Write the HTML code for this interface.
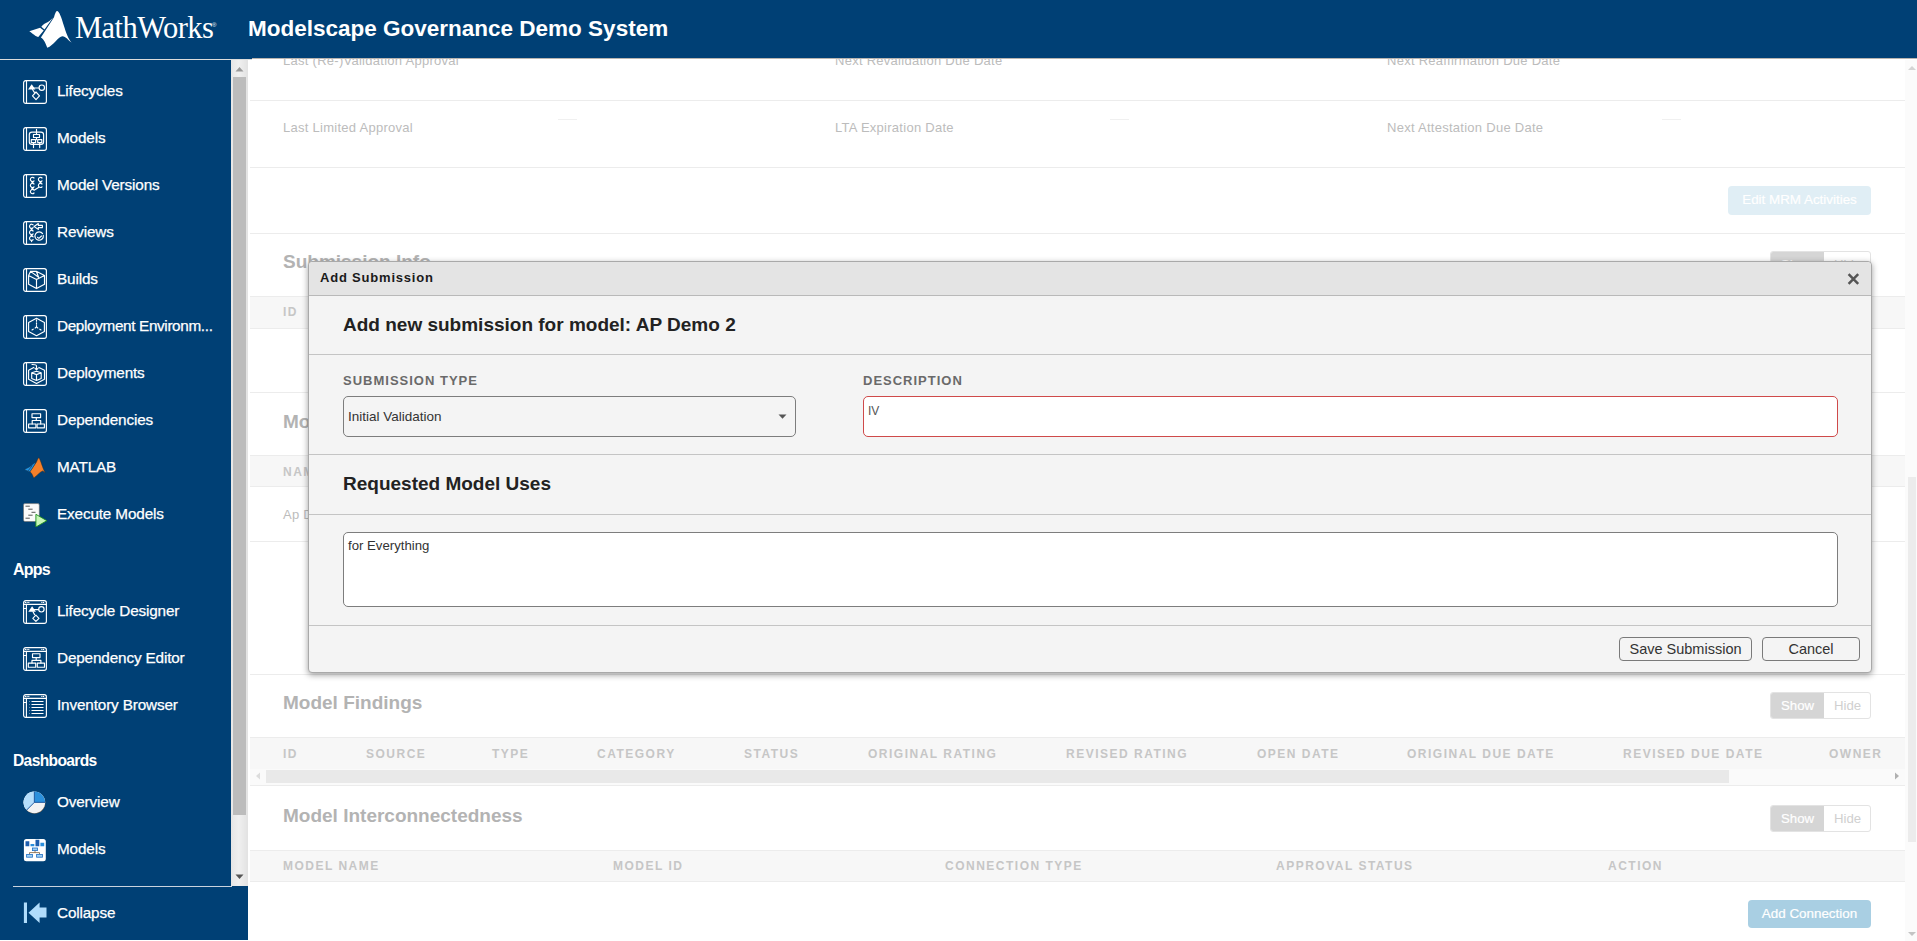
<!DOCTYPE html>
<html><head><meta charset="utf-8">
<style>
*{box-sizing:border-box;margin:0;padding:0}
html,body{width:1917px;height:941px;overflow:hidden;background:#fff;font-family:"Liberation Sans",sans-serif}
.a{position:absolute;white-space:nowrap}
#hdr{position:absolute;left:0;top:0;width:1917px;height:58px;background:#004075}
#hline{position:absolute;left:0;top:58px;width:252px;height:1px;background:#004075;box-shadow:0 1px 0 #dcdcdc}
#side{position:absolute;left:0;top:60px;width:248px;height:880px;background:#004075}
.nav{position:absolute;left:57px;color:#fff;font-size:15.3px;line-height:19px;letter-spacing:-0.15px;-webkit-text-stroke:0.25px #fff}
.ico{position:absolute;left:23px;width:24px;height:24px}
.sec{position:absolute;left:13px;color:#fff;font-weight:bold;font-size:15px;line-height:18px}
/* main */
.bt{color:#bcbcbc;font-size:13px;letter-spacing:0.27px;line-height:16px}
.hl{position:absolute;left:250px;width:1655px;height:1px;background:#ececec}
.band{position:absolute;left:250px;width:1655px;background:#f7f7f7;border-top:1px solid #ececec;border-bottom:1px solid #ececec}
.th{position:absolute;color:#c6c6c6;font-weight:bold;font-size:12px;letter-spacing:1.5px;line-height:16px}
.h2{position:absolute;left:283px;color:#b3b3b3;font-weight:bold;font-size:19px;line-height:22px}
.sh{position:absolute;left:1770px;width:101px;height:27px;border:1px solid #e3e3e3;border-radius:3px;overflow:hidden;background:#fff}
.sh .s{position:absolute;left:0;top:0;width:53px;height:100%;background:#d5d5d5;color:#fff;font-size:13.2px;line-height:26px;text-indent:10px;-webkit-text-stroke:0.2px #fff}
.sh .h{position:absolute;left:53px;top:0;width:48px;height:100%;color:#d0d0d0;font-size:13.2px;line-height:26px;text-indent:10px}
/* modal */
#modal{position:absolute;left:308px;top:261px;width:1564px;height:412px;background:#f4f4f4;border:1px solid #a9a9a9;border-radius:4px;box-shadow:0 2px 6px rgba(0,0,0,.38)}
#mtitle{position:absolute;left:0;top:0;width:100%;height:34px;background:#e4e4e4;border-bottom:1px solid #b9b9b9;border-radius:4px 4px 0 0}
.ml{position:absolute;left:0;width:1562px;height:1px;background:#c4c4c4}
.lbl{position:absolute;color:#6a6a6a;font-weight:bold;font-size:13px;letter-spacing:1px;line-height:15px}
.btn{position:absolute;border:1px solid #7a7a7a;border-radius:4px;background:#f4f4f4;color:#333;font-size:14.5px;line-height:23px;text-align:center}
</style></head><body>
<!-- right scrollbar -->
<div class="a" style="left:1905px;top:60px;width:12px;height:881px;background:#fbfbfb"></div>
<div class="a" style="left:1908px;top:477px;width:8px;height:365px;background:#ececec"></div>
<svg class="a" style="left:1907px;top:64px" width="10" height="8"><path d="M1 6 L5 2 L9 6Z" fill="#d4d4d4"/></svg>
<svg class="a" style="left:1907px;top:930px" width="10" height="8"><path d="M1 2 L5 6 L9 2Z" fill="#c4c4c4"/></svg>
<div class="a" style="left:248px;top:60px;width:2px;height:881px;background:#fff"></div>

<!-- MRM dates rows -->
<div class="a bt" style="left:283px;top:53px">Last (Re-)Validation Approval</div>
<div class="a bt" style="left:835px;top:53px">Next Revalidation Due Date</div>
<div class="a bt" style="left:1387px;top:53px">Next Reaffirmation Due Date</div>

<div class="hl" style="top:100px"></div>
<div class="a bt" style="left:283px;top:120px">Last Limited Approval</div>
<div class="a bt" style="left:835px;top:120px">LTA Expiration Date</div>
<div class="a bt" style="left:1387px;top:120px">Next Attestation Due Date</div>
<div class="a" style="left:558px;top:119px;width:19px;height:1px;background:#f0f0f0"></div>
<div class="a" style="left:1110px;top:119px;width:19px;height:1px;background:#f0f0f0"></div>
<div class="a" style="left:1662px;top:119px;width:19px;height:1px;background:#f0f0f0"></div>
<div class="hl" style="top:167px"></div>
<div class="a" style="left:1728px;top:186px;width:143px;height:29px;background:#e0eef5;border-radius:4px;color:#fff;font-size:13.4px;line-height:27px;text-align:center;-webkit-text-stroke:0.2px #fff">Edit MRM Activities</div>
<div class="hl" style="top:233px"></div>

<!-- Submission Info -->
<div class="h2" style="top:251px">Submission Info</div>
<div class="sh" style="top:251px"><div class="s">Show</div><div class="h">Hide</div></div>
<div class="band" style="top:296px;height:33px"></div>
<div class="th" style="left:283px;top:304px">ID</div>
<div class="hl" style="top:392px"></div>

<!-- Model Uses -->
<div class="h2" style="top:411px">Model Uses</div>
<div class="band" style="top:455px;height:32px"></div>
<div class="th" style="left:283px;top:464px">NAME</div>
<div class="a bt" style="left:283px;top:507px">Ap Demo 2</div>
<div class="hl" style="top:541px"></div>
<div class="hl" style="top:674px"></div>

<!-- Model Findings -->
<div class="h2" style="top:692px">Model Findings</div>
<div class="sh" style="top:692px"><div class="s">Show</div><div class="h">Hide</div></div>
<div class="band" style="top:737px;height:32px;border-bottom:none"></div>
<div class="th" style="left:283px;top:746px">ID</div>
<div class="th" style="left:366px;top:746px">SOURCE</div>
<div class="th" style="left:492px;top:746px">TYPE</div>
<div class="th" style="left:597px;top:746px">CATEGORY</div>
<div class="th" style="left:744px;top:746px">STATUS</div>
<div class="th" style="left:868px;top:746px">ORIGINAL RATING</div>
<div class="th" style="left:1066px;top:746px">REVISED RATING</div>
<div class="th" style="left:1257px;top:746px">OPEN DATE</div>
<div class="th" style="left:1407px;top:746px">ORIGINAL DUE DATE</div>
<div class="th" style="left:1623px;top:746px">REVISED DUE DATE</div>
<div class="th" style="left:1829px;top:746px">OWNER</div>
<div class="a" style="left:250px;top:769px;width:1655px;height:16px;background:#fafafa"></div>
<div class="a" style="left:266px;top:770px;width:1463px;height:13px;background:#e9e9e9"></div>
<svg class="a" style="left:254px;top:771px" width="8" height="10"><path d="M6 1.5 L2 5 L6 8.5Z" fill="#dcdcdc"/></svg>
<svg class="a" style="left:1893px;top:771px" width="8" height="10"><path d="M2 1.5 L6 5 L2 8.5Z" fill="#b0b0b0"/></svg>
<div class="hl" style="top:785px"></div>

<!-- Model Interconnectedness -->
<div class="h2" style="top:805px">Model Interconnectedness</div>
<div class="sh" style="top:805px"><div class="s">Show</div><div class="h">Hide</div></div>
<div class="band" style="top:850px;height:32px"></div>
<div class="th" style="left:283px;top:858px">MODEL NAME</div>
<div class="th" style="left:613px;top:858px">MODEL ID</div>
<div class="th" style="left:945px;top:858px">CONNECTION TYPE</div>
<div class="th" style="left:1276px;top:858px">APPROVAL STATUS</div>
<div class="th" style="left:1608px;top:858px">ACTION</div>
<div class="a" style="left:1748px;top:900px;width:123px;height:28px;background:#a9cfe3;border-radius:4px;color:#fff;font-size:13.4px;line-height:27px;text-align:center;-webkit-text-stroke:0.2px #fff">Add Connection</div>
<div id="hdr"></div><div class="a" style="left:252px;top:58px;width:1665px;height:1px;background:#b8b4b0"></div>
<div id="hline"></div>
<svg class="a" style="left:0;top:0" width="100" height="59" viewBox="0 0 100 59">
 <path fill="#fff" d="M40.9 37.5 L54 17.2 C55 14 55.8 11.3 57 11.1 C59.3 11.2 61.5 18 63.8 25.5 C66 32.5 68.5 39.5 71.6 42.6 C68.3 40.3 65.8 36.3 62.4 36.2 C58.5 36.3 53.5 45.5 47.3 47.8 C45.8 44 44 39 40.9 37.5 Z"/>
 <path fill="#fff" d="M41.3 26.7 C43.5 24.2 45.5 23 47.5 22.2 C49.8 21 51.6 18.8 53.1 17.4 L44.5 29.6 Z"/>
 <path fill="#fff" d="M29.3 31.3 C33 30 36.5 28.6 40.1 27.7 L43.7 30.5 L38.3 37.1 C36 36.8 32.5 33.5 29.3 31.3 Z"/>
</svg>
<div class="a" style="left:75px;top:10px;color:#fff;font-family:'Liberation Serif',serif;font-size:30.5px;line-height:36px;letter-spacing:-0.55px">MathWorks</div>
<div class="a" style="left:212px;top:21px;color:#fff;font-size:6px;line-height:8px">&#174;</div>
<div class="a" style="left:248px;top:15px;color:#fff;font-weight:bold;font-size:22.5px;line-height:28px">Modelscape Governance Demo System</div>
<div id="side"></div>
<div class="a" style="left:231px;top:60px;width:17px;height:826px;background:linear-gradient(90deg,#e6e6e6,#f0f0f0 45%,#e2e2e2)"></div>
<div class="a" style="left:233px;top:77px;width:13px;height:738px;background:#bcbcbc"></div>
<svg class="a" style="left:234px;top:65px" width="11" height="8"><path d="M1.5 6.5 L5.5 2 L9.5 6.5Z" fill="#9a9a9a"/></svg>
<svg class="a" style="left:234px;top:873px" width="11" height="8"><path d="M1.5 1.5 L5.5 6 L9.5 1.5Z" fill="#555"/></svg>
<div class="a" style="left:13px;top:886px;width:219px;height:1px;background:#c9d3de"></div>
<svg class="ico" style="top:80px" viewBox="0 0 24 24" fill="none" stroke="#fff" stroke-width="1.15" stroke-linecap="round" stroke-linejoin="round"><rect x="0.6" y="0.6" width="22.8" height="22.8" rx="2.2"/><line x1="3.5" y1="0.6" x2="3.5" y2="23.4"/><path d="M5 9.6 L8.7 4.3 L12.4 9.6Z" fill="#fff" stroke="none"/><line x1="9" y1="8" x2="16" y2="8"/><circle cx="18.8" cy="7.7" r="2.7"/><line x1="9.5" y1="9.5" x2="11.4" y2="12.4"/><path d="M13 12 L16.5 15.8 L13 19.6 L9.5 15.8Z"/></svg>
<div class="nav" style="top:81px">Lifecycles</div>
<svg class="ico" style="top:127px" viewBox="0 0 24 24" fill="none" stroke="#fff" stroke-width="1.15" stroke-linecap="round" stroke-linejoin="round"><rect x="0.6" y="0.6" width="22.8" height="22.8" rx="2.2"/><line x1="3.5" y1="0.6" x2="3.5" y2="23.4"/><rect x="6.3" y="5.1" width="14.3" height="12.2" rx="2.6"/><path d="M13.5 2.2 V7.5 M13.5 10.5 V12.6 M10.5 15.6 V20.6 M16.7 15.6 V20.6"/><rect x="10.5" y="7.5" width="6" height="3"/><rect x="8.3" y="12.6" width="4.3" height="3"/><rect x="14.7" y="12.6" width="4.1" height="3"/></svg>
<div class="nav" style="top:128px">Models</div>
<svg class="ico" style="top:174px" viewBox="0 0 24 24" fill="none" stroke="#fff" stroke-width="1.15" stroke-linecap="round" stroke-linejoin="round"><rect x="0.6" y="0.6" width="22.8" height="22.8" rx="2.2"/><line x1="3.5" y1="0.6" x2="3.5" y2="23.4"/><path d="M11.06 3.99 A2.1 2.1 0 1 0 11.06 6.81 M11.06 9.99 A2.1 2.1 0 1 0 11.06 12.81 M11.06 16.19 A2.1 2.1 0 1 0 11.06 19.01 M19.06 3.99 A2.1 2.1 0 1 0 19.06 6.81 M19.06 9.99 A2.1 2.1 0 1 0 19.06 12.81 M8.60 7.50 L10.40 9.30 M10.40 7.50 L8.60 9.30 M8.60 13.60 L10.40 15.40 M10.40 13.60 L8.60 15.40 M16.60 7.50 L18.40 9.30 M18.40 7.50 L16.60 9.30 M15.9 13.3 L11.1 16.2"/></svg>
<div class="nav" style="top:175px">Model Versions</div>
<svg class="ico" style="top:221px" viewBox="0 0 24 24" fill="none" stroke="#fff" stroke-width="1.15" stroke-linecap="round" stroke-linejoin="round"><rect x="0.6" y="0.6" width="22.8" height="22.8" rx="2.2"/><line x1="3.5" y1="0.6" x2="3.5" y2="23.4"/><path d="M10.16 3.89 A2.1 2.1 0 1 0 10.16 6.71 M10.16 9.99 A2.1 2.1 0 1 0 10.16 12.81 M10.16 15.89 A2.1 2.1 0 1 0 10.16 18.71 M7.70 7.45 L9.50 9.25 M9.50 7.45 L7.70 9.25 M7.70 13.45 L9.50 15.25 M9.50 13.45 L7.70 15.25 M8.6 19.5 L8.6 20.6"/><path d="M11.1 5.5 L15.3 2.5 L15.3 4.4 L19.4 4.4 L19.4 6.6 L15.3 6.6 L15.3 8.4Z"/><path d="M20.3 14.3 A4.2 4.2 0 1 1 19.6 12.6"/><path d="M14.5 16.3 L15.9 17.4 L18.5 15"/></svg>
<div class="nav" style="top:222px">Reviews</div>
<svg class="ico" style="top:268px" viewBox="0 0 24 24" fill="none" stroke="#fff" stroke-width="1.15" stroke-linecap="round" stroke-linejoin="round"><rect x="0.6" y="0.6" width="22.8" height="22.8" rx="2.2"/><line x1="3.5" y1="0.6" x2="3.5" y2="23.4"/><path d="M5.6 7.5 L13.5 11.4 L21.5 7.5 L21.5 16.2 L13.5 20.6 L5.6 16.2Z M13.5 11.4 V20.6 M5.6 7.5 L7.5 3.4 L15.6 9.3 M13.3 3.3 L21.5 7.5 M7.5 3.4 L13.3 3.3 L15.6 9.3"/></svg>
<div class="nav" style="top:269px">Builds</div>
<svg class="ico" style="top:315px" viewBox="0 0 24 24" fill="none" stroke="#fff" stroke-width="1.15" stroke-linecap="round" stroke-linejoin="round"><rect x="0.6" y="0.6" width="22.8" height="22.8" rx="2.2"/><line x1="3.5" y1="0.6" x2="3.5" y2="23.4"/><path d="M13.5 3.3 L21.4 7.6 L21.4 16.5 L13.5 20.7 L5.6 16.5 L5.6 7.6Z"/><path d="M13.5 4.8 V6.2 M13.5 7.8 V9.2 M13.5 10.6 V11.8 L12.2 13 M13.5 11.8 L14.8 13 M10.2 14.2 L9 14.9 M16.8 14.2 L18 14.9"/></svg>
<div class="nav" style="top:316px;letter-spacing:-0.35px">Deployment Environm...</div>
<svg class="ico" style="top:362px" viewBox="0 0 24 24" fill="none" stroke="#fff" stroke-width="1.15" stroke-linecap="round" stroke-linejoin="round"><rect x="0.6" y="0.6" width="22.8" height="22.8" rx="2.2"/><line x1="3.5" y1="0.6" x2="3.5" y2="23.4"/><path d="M10.8 5.4 L5.6 8.3 L5.6 17.3 L13.5 21.5 L21.5 17.3 L21.5 8.3 L15.9 5.4"/><path d="M13.5 9.3 L18.2 10.8 L18.2 16.5 L13.5 18.5 L8.7 16.5 L8.7 10.8Z M8.7 10.8 L13.5 12.6 L18.2 10.8 M13.5 12.6 V18.5"/><path d="M9 2.5 C11 2.6 13.5 2.6 13.5 4 V7.8 M12 6.4 L13.5 7.9 L15 6.4"/></svg>
<div class="nav" style="top:363px">Deployments</div>
<svg class="ico" style="top:409px" viewBox="0 0 24 24" fill="none" stroke="#fff" stroke-width="1.15" stroke-linecap="round" stroke-linejoin="round"><rect x="0.6" y="0.6" width="22.8" height="22.8" rx="2.2"/><line x1="3.5" y1="0.6" x2="3.5" y2="23.4"/><rect x="9" y="4.7" width="8.6" height="3.9"/><path d="M13.3 8.6 V11.5 M9.2 15 V11.5 H17.7 V15"/><rect x="5.6" y="15" width="7.3" height="3.8"/><rect x="14.1" y="15" width="7.3" height="3.8"/></svg>
<div class="nav" style="top:410px">Dependencies</div>
<svg class="ico" style="top:456px" viewBox="0 0 24 24"><path d="M15.9 1.7 C17.5 3.5 19.5 12 22.2 16.6 C21.3 16 20.5 15 19.7 14.9 C17.5 15.5 13.5 20 10.7 22 C9.8 19.5 8.5 16.5 6.9 15.7 L13.5 6 C14.3 4.2 15 2 15.9 1.7Z" fill="#f5802a" stroke="#2e2a26" stroke-width="0.45"/><path d="M1.4 13.4 C4.5 12.2 7.5 10.5 9.5 8.6 C11 7.3 12 6.5 12.9 5.9 C11.3 9.5 8.7 13 6.9 15.7 C5 15.3 3 14.3 1.4 13.4Z" fill="#1f96e8" stroke="#1b2b3a" stroke-width="0.45"/><path d="M5.1 14.9 L9.2 9.6" stroke="#1b3a5a" stroke-width="0.7"/></svg>
<div class="nav" style="top:457px">MATLAB</div>
<svg class="ico" style="top:503px" viewBox="0 0 24 24"><rect x="0.5" y="0.6" width="15.8" height="17.9" rx="1.4" fill="#fbfbfb" stroke="#6b6b6b" stroke-width="0.6"/><path d="M2.5 3.2 H6.8 M5.3 6.2 H9.6 M8.5 9.3 H12.5 M5.3 12.2 H9.6 M2.5 15.2 H6.8" stroke="#444" stroke-width="0.9"/><path d="M12.9 11.3 L23.9 17.7 L12.9 24Z" fill="#c8f7b8" stroke="#1c8c1c" stroke-width="0.9"/></svg>
<div class="nav" style="top:504px">Execute Models</div>
<div class="sec" style="top:561px;font-size:16px;letter-spacing:-0.8px">Apps</div>
<svg class="ico" style="top:600px" viewBox="0 0 24 24" fill="none" stroke="#fff" stroke-width="1.15" stroke-linecap="round" stroke-linejoin="round"><rect x="0.6" y="0.6" width="22.8" height="22.8" rx="2.2"/><line x1="0.6" y1="4.3" x2="23.4" y2="4.3"/><line x1="3.4" y1="4.3" x2="3.4" y2="23.4"/><path d="M2.3 2.4 h.2 M4 2.4 h.2 M5.7 2.4 h.2 M18.8 2.4 h.2 M20.5 2.4 h.2" stroke-width="1.1"/><line x1="0.6" y1="8.5" x2="3.4" y2="8.5"/><path d="M5.3 11.8 L9.1 6.3 L12.9 11.8Z" fill="#fff" stroke="none"/><line x1="9.5" y1="9.6" x2="15.7" y2="9.6"/><circle cx="18.4" cy="9.3" r="2.7"/><line x1="10" y1="11.8" x2="11.6" y2="14.6"/><path d="M12.9 15.2 L16 18.3 L12.9 21.4 L9.8 18.3Z"/></svg>
<div class="nav" style="top:601px">Lifecycle Designer</div>
<svg class="ico" style="top:647px" viewBox="0 0 24 24" fill="none" stroke="#fff" stroke-width="1.15" stroke-linecap="round" stroke-linejoin="round"><rect x="0.6" y="0.6" width="22.8" height="22.8" rx="2.2"/><line x1="0.6" y1="4.3" x2="23.4" y2="4.3"/><line x1="3.4" y1="4.3" x2="3.4" y2="23.4"/><path d="M2.3 2.4 h.2 M4 2.4 h.2 M5.7 2.4 h.2 M18.8 2.4 h.2 M20.5 2.4 h.2" stroke-width="1.1"/><line x1="0.6" y1="8.5" x2="3.4" y2="8.5"/><rect x="9.5" y="6.7" width="7.5" height="3.9"/><path d="M13.2 10.6 V13.3 M9 16.1 V13.3 H17.9 V16.1"/><rect x="5.3" y="16.1" width="7.4" height="4.1"/><rect x="14.3" y="16.1" width="7.2" height="4.1"/></svg>
<div class="nav" style="top:648px">Dependency Editor</div>
<svg class="ico" style="top:694px" viewBox="0 0 24 24" fill="none" stroke="#fff" stroke-width="1.15" stroke-linecap="round" stroke-linejoin="round"><rect x="0.6" y="0.6" width="22.8" height="22.8" rx="2.2"/><line x1="0.6" y1="4.3" x2="23.4" y2="4.3"/><line x1="3.4" y1="4.3" x2="3.4" y2="23.4"/><path d="M2.3 2.4 h.2 M4 2.4 h.2 M5.7 2.4 h.2 M18.8 2.4 h.2 M20.5 2.4 h.2" stroke-width="1.1"/><line x1="0.6" y1="8.5" x2="3.4" y2="8.5"/><path d="M6 7.5 h.4 M6 10.5 h.4 M6 13.5 h.4 M6 16.5 h.4 M6 19.5 h.4 M8.5 7.5 H20.5 M8.5 10.5 H20.5 M8.5 13.5 H20.5 M8.5 16.5 H20.5 M8.5 19.5 H20.5" stroke-linecap="butt"/></svg>
<div class="nav" style="top:695px">Inventory Browser</div>
<div class="sec" style="top:752px;font-size:15.6px;letter-spacing:-0.65px">Dashboards</div>
<svg class="ico" style="top:791px" viewBox="0 0 24 24"><circle cx="11.6" cy="11.75" r="10.8" fill="#6b5a48"/><circle cx="11.35" cy="11.35" r="10.8" fill="#f3f3f3"/><path d="M11.35 11.35 L11.35 0.55 A10.8 10.8 0 0 1 22.15 11.35Z" fill="#2b90dc"/><path d="M11.35 11.35 L11.35 0.55 A10.8 10.8 0 0 0 3.71 18.99Z" fill="#b5defb"/><path d="M11.35 0.55 V11.35 H22.15 M11.35 11.35 L3.71 18.99" stroke="#0a4a96" stroke-width="0.9" fill="none"/></svg>
<div class="nav" style="top:792px">Overview</div>
<svg class="ico" style="top:838px" viewBox="0 0 24 24"><rect x="0.9" y="1" width="21.9" height="22.3" rx="2.5" fill="#fff"/><path d="M2.5 3.3 h3.8 v4.9 h-3.8Z M12.5 1.8 h3.8 v6.4 h-3.8Z" fill="#1f5fae"/><path d="M7.5 6 h3.8 v2.2 h-3.8Z M17.4 4.8 h3.8 v3.4 h-3.8Z" fill="#2b8fdc"/><g stroke="#1f6fc4" stroke-width="0.8"><rect x="9.5" y="10" width="5" height="2.6" fill="#9fd0f5"/><path d="M12 12.6 V14.6 M6.5 16.4 V14.6 H16.5 V16.4" stroke="#7a5a3a" fill="none"/><rect x="3.6" y="16.4" width="5.8" height="2.8" fill="#9fd0f5"/><rect x="13.6" y="16.4" width="5.8" height="2.8" fill="#9fd0f5"/></g></svg>
<div class="nav" style="top:839px">Models</div>
<svg class="ico" style="top:901px" viewBox="0 0 24 24"><rect x="0.9" y="1.5" width="3.1" height="20.5" fill="#b0dcfb"/><path d="M5.5 11.7 L16.6 1.5 L16.6 6.6 L23.5 6.6 L23.5 16.6 L16.6 16.6 L16.6 22Z" fill="#b0dcfb"/></svg>
<div class="nav" style="top:903px">Collapse</div>
<div id="modal">
 <div id="mtitle"></div>
 <div class="a" style="left:11px;top:8px;color:#1a1a1a;font-weight:bold;font-size:13px;letter-spacing:0.8px;line-height:16px">Add Submission</div>
 <svg class="a" style="left:1538px;top:11px" width="13" height="13" viewBox="0 0 13 13"><path d="M1.6 1.2 L11.2 10.8 M11.2 1.2 L1.6 10.8" stroke="#555" stroke-width="2.5"/></svg>
 <div class="a" style="left:34px;top:52px;color:#222;font-weight:bold;font-size:19px;line-height:22px">Add new submission for model: AP Demo 2</div>
 <div class="ml" style="top:92px"></div>
 <div class="lbl" style="left:34px;top:111px">SUBMISSION TYPE</div>
 <div class="a" style="left:34px;top:134px;width:453px;height:41px;border:1px solid #7d7d7d;border-radius:5px;background:#f4f4f4"></div>
 <div class="a" style="left:39px;top:147px;color:#333;font-size:13.5px;line-height:16px">Initial Validation</div>
 <svg class="a" style="left:469px;top:152px" width="10" height="6"><path d="M0.5 0.5 L4.5 4.8 L8.5 0.5Z" fill="#555"/></svg>
 <div class="lbl" style="left:554px;top:111px">DESCRIPTION</div>
 <div class="a" style="left:554px;top:134px;width:975px;height:41px;border:1.5px solid #cf4a4a;border-radius:5px;background:#fff"></div>
 <div class="a" style="left:559px;top:142px;color:#555;font-size:12px;line-height:14px">IV</div>
 <div class="ml" style="top:192px"></div>
 <div class="a" style="left:34px;top:211px;color:#222;font-weight:bold;font-size:19px;line-height:22px">Requested Model Uses</div>
 <div class="ml" style="top:252px"></div>
 <div class="a" style="left:34px;top:270px;width:1495px;height:75px;border:1px solid #7d7d7d;border-radius:5px;background:#fff"></div>
 <div class="a" style="left:39px;top:276px;color:#333;font-size:13.2px;line-height:16px">for Everything</div>
 <div class="ml" style="top:363px"></div>
 <div class="btn" style="left:1310px;top:375px;width:133px;height:24px">Save Submission</div>
 <div class="btn" style="left:1453px;top:375px;width:98px;height:24px">Cancel</div>
</div>
</body></html>
